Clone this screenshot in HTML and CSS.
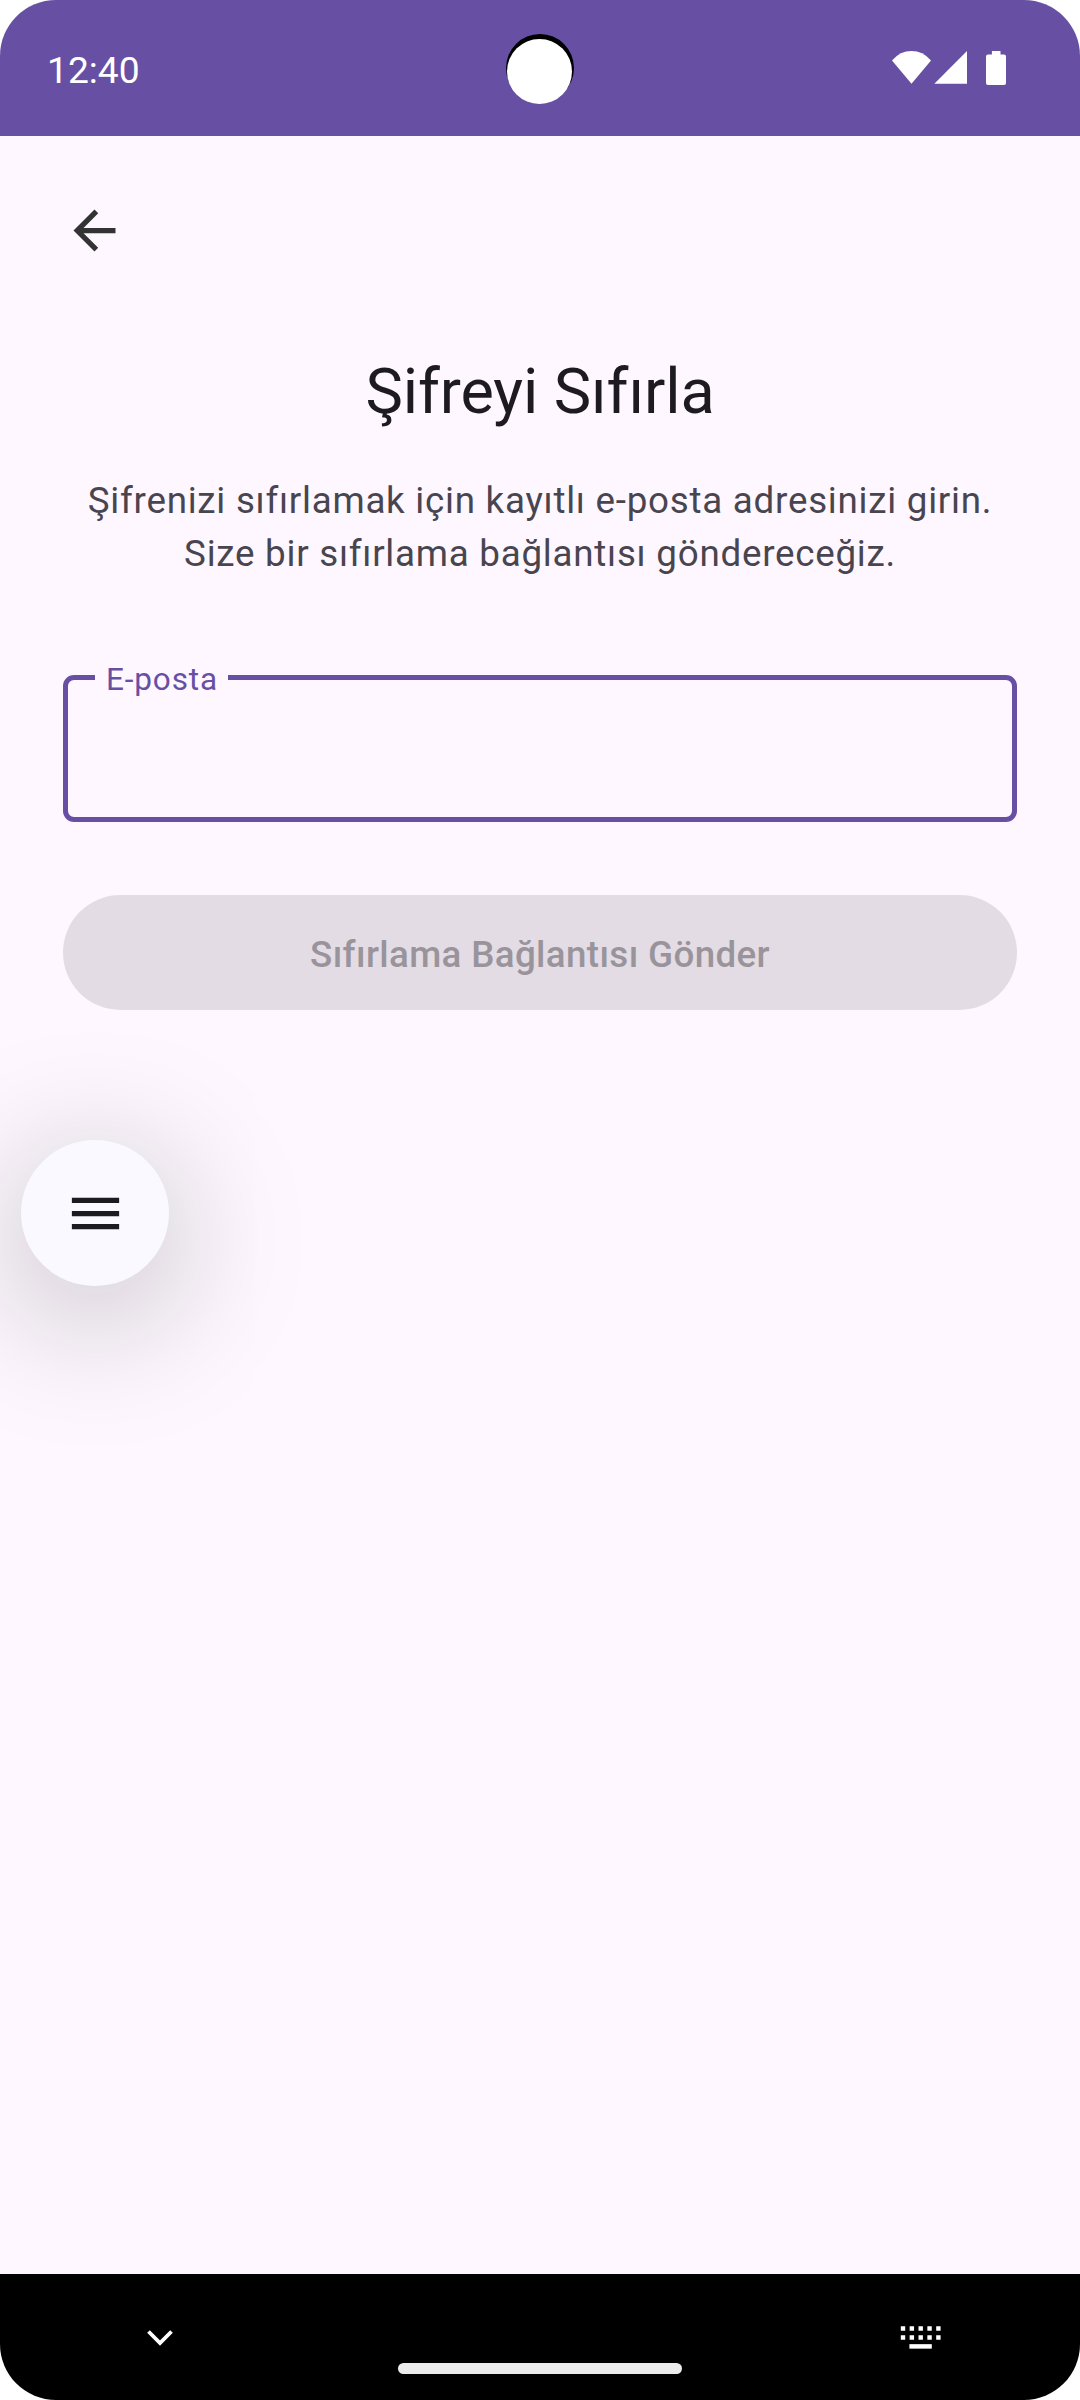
FILE: index.html
```html
<!DOCTYPE html>
<html lang="tr">
<head>
<meta charset="utf-8">
<title>Şifreyi Sıfırla</title>
<link rel="stylesheet" href="styles.css">
</head>
<body>
<div class="screen">
  <header class="status-bar">
    <span class="clock">12:40</span>
    <span class="camera"></span>
    <svg class="status-icons" width="115" height="35" viewBox="0 0 115 35" fill="#fff">
      <path d="M0 9.400Q8.200 0 19.500 0T39 9.400L19.500 32.700Z"/>
      <path d="M42.300 32.700L75 0V32.700Z"/>
      <path d="M99.900 0h8.600v3.400h3.500a2 2 0 0 1 2 2v26.500a2 2 0 0 1-2 2H96a2 2 0 0 1-2-2V5.400a2 2 0 0 1 2-2h3.900Z"/>
    </svg>
  </header>
  <main class="content">
    <button class="back" aria-label="Geri">
      <svg width="63" height="63" viewBox="0 0 24 24" fill="#333"><path d="M20 11H7.830l5.590-5.590L12 4l-8 8 8 8 1.410-1.410L7.830 13H20v-2z"/></svg>
    </button>
    <h1 class="title">Şifreyi Sıfırla</h1>
    <p class="description">Şifrenizi sıfırlamak için kayıtlı e-posta adresinizi girin.<br>Size bir sıfırlama bağlantısı göndereceğiz.</p>
    <div class="field"><label class="field-label">E-posta</label></div>
    <button class="submit" disabled>Sıfırlama Bağlantısı Gönder</button>
    <button class="menu" aria-label="Menü">
      <svg width="63" height="63" viewBox="0 0 24 24" fill="#1c1b1f"><path d="M3 18h18v-2H3v2zm0-5h18v-2H3v2zm0-7v2h18V6H3z"/></svg>
    </button>
  </main>
  <footer class="nav-bar">
    <svg class="chevron" width="26" height="16" viewBox="0 0 26 16"><path d="M1.500 1.500L13 13L24.500 1.500" fill="none" stroke="#fff" stroke-width="3.800"/></svg>
    <span class="handle"></span>
    <svg class="keyboard" width="41" height="23" viewBox="0 0 41 23" fill="none" stroke="#fff" stroke-width="4.500">
      <path d="M.8 2.600H41M.8 11.400H41" stroke-dasharray="4.400 4.450"/>
      <path d="M9.400 20.400H31.800"/>
    </svg>
  </footer>
</div>
</body>
</html>
```
FILE: styles.css
```css
* {
  box-sizing: border-box;
}

body {
  margin: 0;
  background: #fff;
  font-family: Roboto, sans-serif;
}

button {
  padding: 0;
  border: 0;
  background: none;
  font-family: inherit;
}

svg {
  display: block;
}

.screen {
  display: flex;
  flex-direction: column;
  width: 1080px;
  height: 2400px;
  overflow: hidden;
  border-radius: 56px;
  background: #fef7ff;
}

.status-bar {
  position: relative;
  display: flex;
  justify-content: space-between;
  height: 136px;
  padding: 48px 73px 0 47px;
  background: #6750a4;
}

.clock {
  color: #fff;
  font-size: 37.2px;
  line-height: 44px;
}

.camera {
  position: absolute;
  top: 34px;
  left: 506px;
  width: 68px;
  height: 68px;
  border-radius: 50%;
  background: #000;
}

.camera::after {
  content: "";
  position: absolute;
  top: 5px;
  left: 1px;
  width: 65px;
  height: 65px;
  border-radius: 50%;
  background: #fff;
}

.status-icons {
  margin-top: 3px;
}

.content {
  display: flex;
  flex: 1;
  flex-direction: column;
  padding: 63px 63px 0;
}

.back {
  width: 63px;
  height: 63px;
}

.title {
  margin: 88px 0 0;
  color: #1d1b20;
  font-size: 63px;
  font-weight: 400;
  letter-spacing: -0.1px;
  line-height: 84px;
  text-align: center;
}

.description {
  margin: 40px -20px 0;
  color: #49454f;
  font-size: 36.75px;
  letter-spacing: 0.745px;
  line-height: 53px;
  text-align: center;
}

.field {
  height: 147px;
  margin-top: 95px;
  padding-left: 27px;
  border: 5px solid #6750a4;
  border-radius: 11px;
}

.field-label {
  display: block;
  width: 133px;
  height: 42px;
  margin-top: -21px;
  padding-left: 11px;
  background: #fef7ff;
  color: #6750a4;
  font-size: 31.5px;
  letter-spacing: 0.85px;
  line-height: 42px;
}

.submit {
  height: 115px;
  margin-top: 73px;
  padding-top: 3px;
  border-radius: 58px;
  background: #e3dce4;
  color: #99949b;
  font-size: 36.75px;
  font-weight: 500;
  letter-spacing: 0.36px;
}

.menu {
  display: flex;
  align-items: center;
  justify-content: center;
  width: 148px;
  height: 146px;
  margin: 130px 0 0 -42px;
  border-radius: 50%;
  background: #f9f9ff;
  box-shadow: 0 26px 136px 5px rgba(10, 20, 10, 0.26);
}

.nav-bar {
  display: flex;
  justify-content: space-between;
  height: 126px;
  padding: 0 139px 0 147px;
  background: #000;
}

.chevron {
  margin-top: 56px;
}

.handle {
  width: 284px;
  height: 11px;
  margin: 89px -7px 0 0;
  border-radius: 5.500px;
  background: #ececec;
}

.keyboard {
  margin-top: 52px;
}
```
